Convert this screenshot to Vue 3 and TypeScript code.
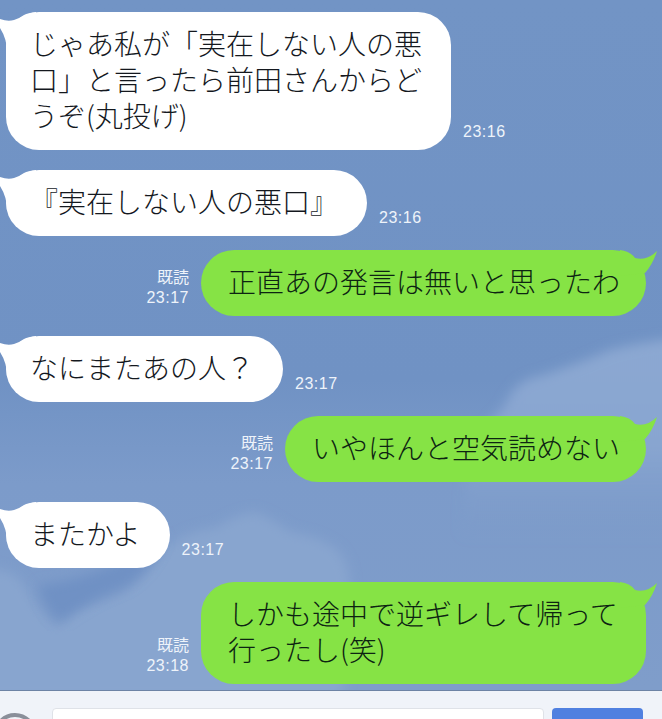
<script setup lang="ts">
interface Msg { side: 'in' | 'out'; text: string; time: string }
const messages: Msg[] = [
  { side: 'in', text: 'じゃあ私が「実在しない人の悪口」と言ったら前田さんからどうぞ(丸投げ)', time: '23:16' },
  { side: 'in', text: '『実在しない人の悪口』', time: '23:16' },
  { side: 'out', text: '正直あの発言は無いと思ったわ', time: '23:17' },
  { side: 'in', text: 'なにまたあの人？', time: '23:17' },
  { side: 'out', text: 'いやほんと空気読めない', time: '23:17' },
  { side: 'in', text: 'またかよ', time: '23:17' },
  { side: 'out', text: 'しかも途中で逆ギレして帰って行ったし(笑)', time: '23:18' },
]
</script>

<template>
  <div class="screen">
    <main class="chat">
      <svg class="sky" width="662" height="690" viewBox="0 0 662 690" aria-hidden="true">
        <defs>
          <filter id="soft" x="-10%" y="-10%" width="120%" height="120%"><feGaussianBlur stdDeviation="6" /></filter>
          <linearGradient id="base" x1="0" y1="0" x2="0" y2="1">
            <stop offset="0" stop-color="#7294c5" />
            <stop offset="0.55" stop-color="#7092c4" />
            <stop offset="0.7" stop-color="#7c9bca" />
            <stop offset="1" stop-color="#7f9dca" />
          </linearGradient>
          <linearGradient id="cloudR" x1="0" y1="0" x2="0" y2="1">
            <stop offset="0" stop-color="#8ca8d2" />
            <stop offset="0.55" stop-color="#88a5d0" />
            <stop offset="1" stop-color="#7d9bca" stop-opacity="0" />
          </linearGradient>
        </defs>
        <rect width="662" height="690" fill="url(#base)" />
        <path filter="url(#soft)" fill="url(#cloudR)" d="M470 440 Q490 425 505 405 Q515 380 540 376 Q575 365 610 350 Q640 342 680 338 L680 540 L460 540 Z" />
        <path filter="url(#soft)" fill="#88a5cf" d="M-20 565 Q5 570 15 575 Q30 590 32 600 Q45 620 58 628 Q70 610 85 606 Q110 600 125 592 Q150 570 165 548 Q190 530 215 528 Q235 515 255 512 Q275 520 290 532 Q315 535 335 548 Q350 560 350 590 Q355 650 340 700 L-20 700 Z" />
        <path filter="url(#soft)" fill="#6f91c4" d="M38 585 Q100 580 165 535 Q150 575 122 588 Q90 600 60 622 Q45 610 38 585 Z" />
      </svg>

      <div v-for="(m, i) in messages" :key="i" class="row" :class="m.side">
        <div v-if="m.side === 'out'" class="meta">
          <span>既読</span>
          <span class="time">{{ m.time }}</span>
        </div>
        <div class="bubble">
          <svg v-if="m.side === 'in'" class="tail tail-in" width="36" height="40" viewBox="0 0 36 40" aria-hidden="true">
            <path d="M0 7 Q8 10 14 8 Q20 6 24 3 Q28 1 36 0 L36 40 L7 40 Q7 27 0 16 Z" fill="#fff" />
          </svg>
          <svg v-else class="tail tail-out" width="38" height="26" viewBox="0 0 38 26" aria-hidden="true">
            <path d="M0 0 Q10 1 15 8 Q27 11 37 1 Q33 14 25 23 L0 26 Z" fill="#86e345" />
          </svg>
          <p class="text">{{ m.text }}</p>
        </div>
        <div v-if="m.side === 'in'" class="meta">
          <span class="time">{{ m.time }}</span>
        </div>
      </div>
    </main>

    <footer class="composer">
      <span class="ring"></span>
      <span class="field"></span>
      <span class="send"></span>
    </footer>
  </div>
</template>

<style>
html, body { margin: 0; background: #f0f3f9; }
</style>

<style scoped>
.screen {
  width: 662px;
  height: 719px;
  overflow: hidden;
  display: flex;
  flex-direction: column;
  font-family: "Noto Sans CJK JP", sans-serif;
}
.chat {
  position: relative;
  height: 691px;
  flex: none;
  box-sizing: border-box;
  padding-top: 12px;
  overflow: hidden;
  border-bottom: 1px solid #6d83a5;
}
.sky { position: absolute; inset: 0; }
.row {
  position: relative;
  display: flex;
  align-items: flex-end;
  gap: 12px;
  margin-bottom: 20px;
}
.row.in { padding-left: 6px; }
.row.out { justify-content: flex-end; padding-right: 16px; }
.row.in + .row.out { margin-top: -6px; }
.bubble {
  position: relative;
  max-width: 392px;
  padding: 13px 29px 17px 24px;
  border-radius: 33px;
  background: #fff;
  color: #14181e;
}
.out .bubble {
  background: #86e345;
  color: #0d2412;
  padding: 13px 26px 17px 27px;
}
.text {
  position: relative;
  margin: 0;
  font-size: 28px;
  line-height: 36px;
  font-weight: 300;
}
.tail { position: absolute; top: 0; }
.tail-in { left: -6px; }
.tail-out { right: -12px; }
.meta {
  display: flex;
  flex-direction: column;
  align-items: flex-end;
  gap: 2px;
  margin-bottom: 8px;
  color: #eef3fa;
  font-size: 16px;
  line-height: 20px;
}
.time {
  font-family: "Liberation Sans", sans-serif;
  font-size: 16px;
  letter-spacing: 0.5px;
}
.composer {
  flex: 1;
  display: flex;
  align-items: flex-start;
  padding: 17px 19px 0 0;
  background: #f0f3f9;
}
.ring {
  flex: none;
  width: 36px;
  height: 36px;
  margin: 5px 0 0 -7px;
  border: 4px solid #8a8f9a;
  border-radius: 50%;
}
.field {
  flex: 1;
  height: 40px;
  margin-left: 15px;
  background: #fff;
  border: 1px solid #dfe2e8;
  border-radius: 4px;
}
.send {
  flex: none;
  width: 91px;
  height: 40px;
  margin-left: 8px;
  background: #5080e0;
  border-radius: 4px;
}
</style>
